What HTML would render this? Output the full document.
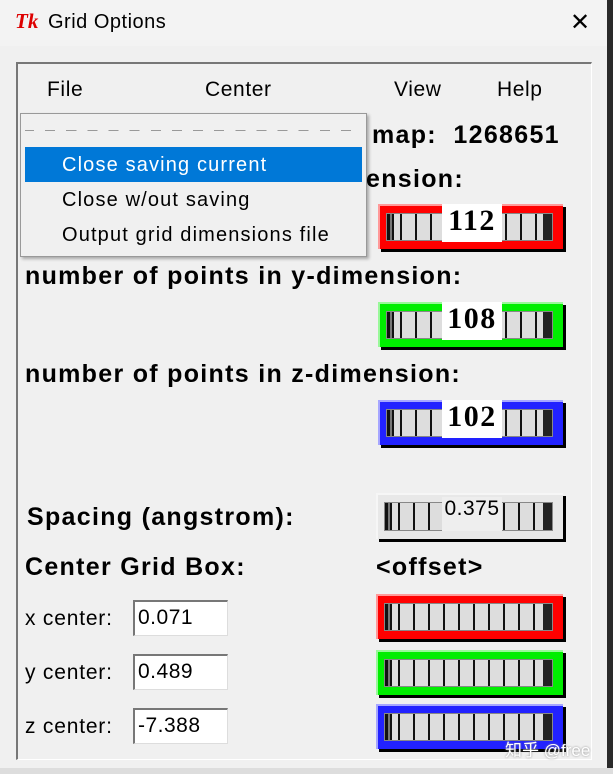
<!DOCTYPE html>
<html><head><meta charset="utf-8"><style>
*{margin:0;padding:0;box-sizing:border-box}
body{width:613px;height:774px;background:#f0f0f0;position:relative;overflow:hidden;font-family:"Liberation Sans",Arial,sans-serif;color:#000}
.a{position:absolute;white-space:nowrap}
.b{font-weight:bold;font-size:25px;letter-spacing:1.3px}
.dial{position:absolute;border-top:2px solid rgba(255,255,255,.6);border-left:2px solid rgba(255,255,255,.6);box-shadow:3px 3px 0 #000}
.wh{position:absolute;left:6px;right:10px;top:7px;bottom:8px;border:1px solid #888;
background:linear-gradient(90deg,#111 0,#111 3px,#777 3px,#777 5px,#111 5px,#111 7px,transparent 7px,transparent calc(100% - 9px),#222 calc(100% - 9px),#222 100%),
repeating-linear-gradient(90deg,#ddd 0,#ddd 13px,#111 13px,#111 15px);}
.val{position:absolute;background:#fff;font-family:"Liberation Serif",serif;font-weight:bold;font-size:30px;letter-spacing:1.5px;text-align:center}
.ent{position:absolute;left:133px;width:95px;height:36px;background:#fff;border-top:2px solid #777;border-left:2px solid #777;border-right:1px solid #ddd;border-bottom:1px solid #ddd;font-size:21px;letter-spacing:0.5px;padding:4px 0 0 3px}
.lab{position:absolute;left:25px;font-size:21px;letter-spacing:0.8px}
.mi{font-size:20px;letter-spacing:1.15px}
.mb{font-size:21px;letter-spacing:0.6px}
</style></head><body>
<div class="a" style="left:0;top:0;width:613px;height:46px;background:#f3f3f3"></div>
<div class="a" style="left:15px;top:9px;color:#d00;font-style:italic;font-weight:bold;font-family:'Liberation Serif',serif;font-size:21px">Tk</div>
<div class="a" style="left:48px;top:11px;font-size:20px;letter-spacing:0.5px">Grid Options</div>
<div class="a" style="left:570px;top:8px;font-size:24px;font-weight:300">✕</div>
<div class="a" style="left:607px;top:0;width:6px;height:774px;background:#2a2a2a"></div>
<div class="a" style="left:0;top:768px;width:613px;height:6px;background:#ddd"></div>
<div class="a" style="left:16px;top:62px;width:576px;height:698px;border:2px solid #777;border-right:1px solid #fff;border-bottom:1px solid #fff"></div>

<div class="a mb" style="left:47px;top:78px">File</div>
<div class="a mb" style="left:205px;top:78px">Center</div>
<div class="a mb" style="left:394px;top:78px">View</div>
<div class="a mb" style="left:497px;top:78px">Help</div>

<div class="a b" style="left:372px;top:121px">map:&nbsp; 1268651</div>
<div class="a b" style="left:366px;top:165px">ension:</div>
<div class="a b" style="left:25px;top:262px">number of points in y-dimension:</div>
<div class="a b" style="left:25px;top:360px">number of points in z-dimension:</div>
<div class="a b" style="left:27px;top:503px">Spacing (angstrom):</div>
<div class="a b" style="left:25px;top:553px">Center Grid Box:</div>
<div class="a b" style="left:376px;top:553px">&lt;offset&gt;</div>

<div class="dial" style="left:378px;top:204px;width:185px;height:45px;background:#f00"><div class="wh"></div><div class="val" style="left:62px;top:-2px;width:60px;height:38px">112</div></div>
<div class="dial" style="left:378px;top:302px;width:185px;height:45px;background:#0e0"><div class="wh"></div><div class="val" style="left:62px;top:-2px;width:60px;height:38px">108</div></div>
<div class="dial" style="left:378px;top:400px;width:185px;height:45px;background:#22f"><div class="wh"></div><div class="val" style="left:62px;top:-2px;width:60px;height:38px">102</div></div>
<div class="dial" style="left:376px;top:493px;width:187px;height:46px;background:#e8e8e8"><div class="wh"></div><div class="val" style="left:64px;top:2px;width:60px;height:34px;font-family:'Liberation Sans',sans-serif;font-weight:normal;font-size:21px;letter-spacing:0.5px;background:#eee">0.375</div></div>
<div class="dial" style="left:376px;top:594px;width:187px;height:45px;background:#f00"><div class="wh"></div></div>
<div class="dial" style="left:376px;top:650px;width:187px;height:45px;background:#0e0"><div class="wh"></div></div>
<div class="dial" style="left:376px;top:704px;width:187px;height:45px;background:#22f"><div class="wh"></div></div>

<div class="lab" style="top:607px">x center:</div><div class="ent" style="top:600px">0.071</div>
<div class="lab" style="top:661px">y center:</div><div class="ent" style="top:654px">0.489</div>
<div class="lab" style="top:715px">z center:</div><div class="ent" style="top:708px">-7.388</div>

<div class="a" style="left:20px;top:113px;width:347px;height:144px;background:#f0f0f0;border:1px solid #999;box-shadow:2px 2px 3px rgba(0,0,0,.3)">
<div class="a" style="left:4px;top:16px;width:330px;border-top:1px dashed #999;border-image:repeating-linear-gradient(90deg,#999 0,#999 10px,transparent 10px,transparent 21px) 1"></div>
<div class="a" style="left:4px;top:33px;width:337px;height:35px;background:#0078d7"></div>
<div class="a mi" style="left:41px;top:40px;color:#fff">Close saving current</div>
<div class="a mi" style="left:41px;top:75px">Close w/out saving</div>
<div class="a mi" style="left:41px;top:110px">Output grid dimensions file</div>
</div>
<div class="a" style="left:505px;top:736px;color:#fff;font-size:17px;font-family:'Liberation Sans','Noto Sans CJK SC',sans-serif;text-shadow:0 0 2px #888">知乎 @free</div>
</body></html>
